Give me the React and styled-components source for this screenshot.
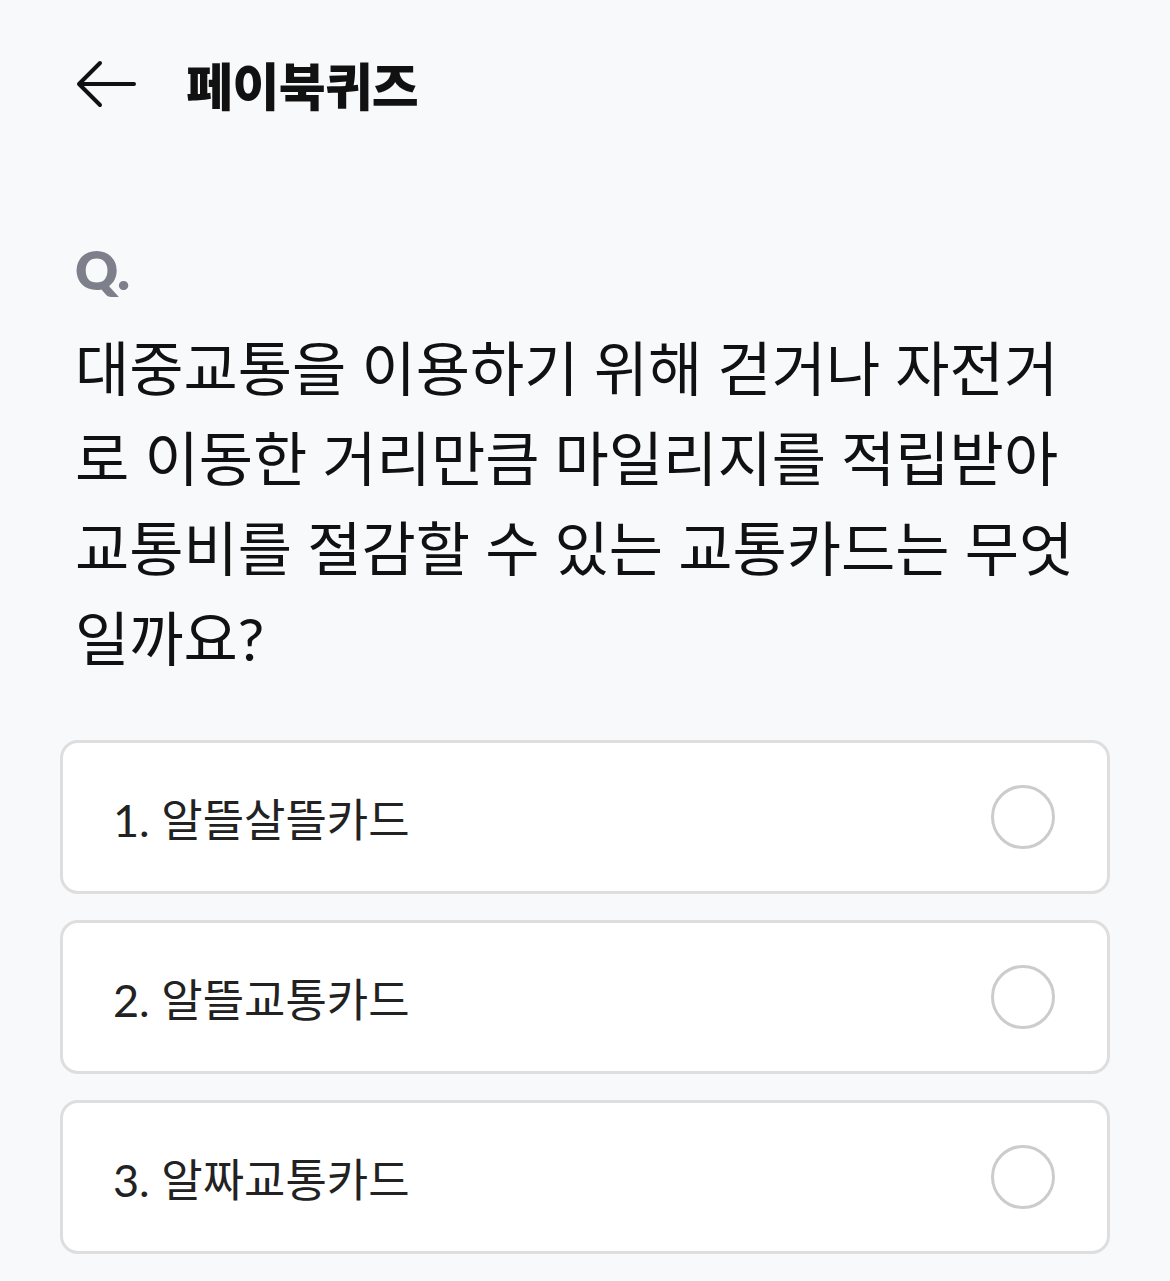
import React from 'react';
import styled, { createGlobalStyle } from 'styled-components';

const GlobalStyle = createGlobalStyle`
  html, body {
    margin: 0;
    padding: 0;
    background: #f8f9fb;
  }
  body {
    font-family: Lato, "Noto Sans CJK KR", sans-serif;
  }
`;

const options = ['알뜰살뜰카드', '알뜰교통카드', '알짜교통카드'];

export default function App() {
  return (
    <>
      <GlobalStyle />
      <Page>
        <Header>
          <BackButton aria-label="뒤로">
            <svg width="60" height="50" viewBox="0 0 60 50" fill="none">
              <path
                d="M58 25H4M24 4L3 25l21 21"
                stroke="#111"
                strokeWidth="4"
                strokeLinecap="round"
                strokeLinejoin="round"
              />
            </svg>
          </BackButton>
          <Title>페이북퀴즈</Title>
        </Header>

        <QuestionBlock>
          <QLabel>Q.</QLabel>
          <QuestionText>
            대중교통을 이용하기 위해 걷거나 자전거로 이동한 거리만큼 마일리지를 적립받아
            교통비를 절감할 수 있는 교통카드는 무엇일까요?
          </QuestionText>
        </QuestionBlock>

        <OptionList>
          {options.map((label, i) => (
            <Option key={label}>
              <OptionLabel>
                {i + 1}. {label}
              </OptionLabel>
              <Radio />
            </Option>
          ))}
        </OptionList>
      </Page>
    </>
  );
}

const Page = styled.div`
  padding: 0 60px 24px;
  min-height: 1281px;
  box-sizing: border-box;
`;

const Header = styled.div`
  height: 168px;
  display: flex;
  align-items: center;
  padding-left: 16px;
`;

const BackButton = styled.button`
  background: none;
  border: none;
  padding: 0;
  display: flex;
  cursor: pointer;
`;

const Title = styled.h1`
  margin: 0 0 0 50px;
  font-family: "Noto Sans CJK KR", sans-serif;
  font-size: 51px;
  font-weight: 900;
  color: #111;
  letter-spacing: -0.5px;
`;

const QuestionBlock = styled.div`
  padding: 72px 15px 0 15px;
`;

const QLabel = styled.div`
  font-family: Lato, sans-serif;
  font-weight: 800;
  font-size: 53px;
  line-height: 60px;
  color: #7d7f8b;
`;

const QuestionText = styled.p`
  margin: 24px 0 0;
  font-family: Lato, "Noto Sans CJK KR", sans-serif;
  font-size: 59px;
  line-height: 90px;
  color: #111;
  max-width: 1028px;
`;

const OptionList = styled.div`
  margin-top: 56px;
  display: flex;
  flex-direction: column;
  gap: 26px;
`;

const Option = styled.div`
  height: 154px;
  box-sizing: border-box;
  background: #fff;
  border: 3px solid #dedede;
  border-radius: 18px;
  display: flex;
  align-items: center;
  justify-content: space-between;
  padding: 0 52px 0 50px;
`;

const OptionLabel = styled.span`
  font-family: Lato, "Noto Sans CJK KR", sans-serif;
  font-size: 45px;
  color: #222;
`;

const Radio = styled.span`
  width: 64px;
  height: 64px;
  box-sizing: border-box;
  border: 3px solid #cccccc;
  border-radius: 50%;
  background: #fff;
`;
